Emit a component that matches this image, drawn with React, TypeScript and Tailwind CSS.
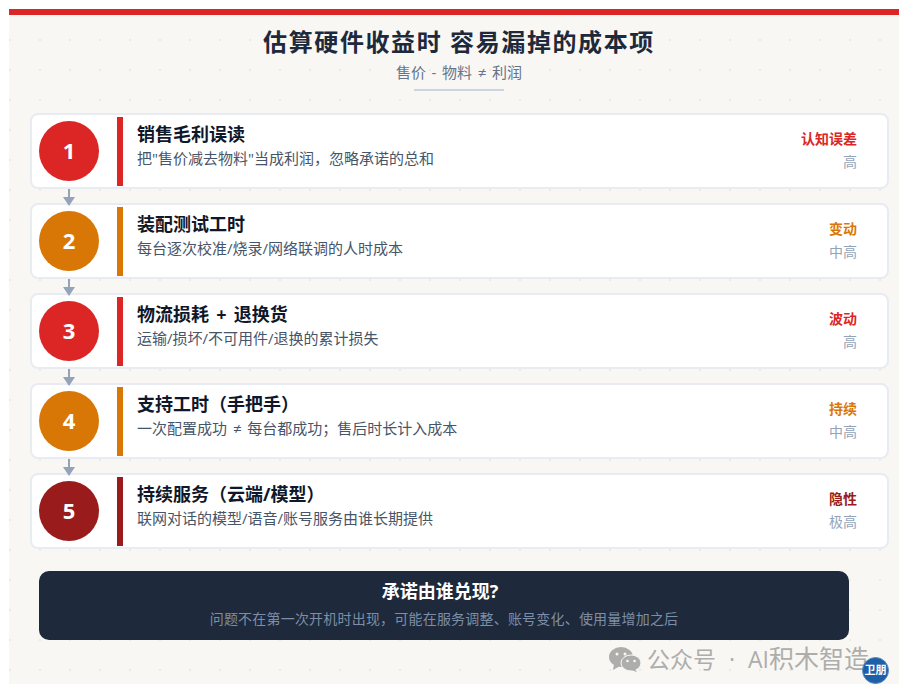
const rows = [
  { n: "1", title: "销售毛利误读", desc: '把"售价减去物料"当成利润，忽略承诺的总和', tag: "认知误差", level: "高", bg: "bg-[#dc2626]", text: "text-[#dc2626]" },
  { n: "2", title: "装配测试工时", desc: "每台逐次校准/烧录/网络联调的人时成本", tag: "变动", level: "中高", bg: "bg-[#d97706]", text: "text-[#d97706]" },
  { n: "3", title: "物流损耗 + 退换货", desc: "运输/损坏/不可用件/退换的累计损失", tag: "波动", level: "高", bg: "bg-[#dc2626]", text: "text-[#dc2626]" },
  { n: "4", title: "支持工时（手把手）", desc: "一次配置成功 ≠ 每台都成功；售后时长计入成本", tag: "持续", level: "中高", bg: "bg-[#d97706]", text: "text-[#d97706]" },
  { n: "5", title: "持续服务（云端/模型）", desc: "联网对话的模型/语音/账号服务由谁长期提供", tag: "隐性", level: "极高", bg: "bg-[#991b1b]", text: "text-[#991b1b]" },
];

function Row({ r, last }: { r: (typeof rows)[number]; last: boolean }) {
  return (
    <div className="relative">
      <div className="flex h-[76px] items-center rounded-lg border-2 border-[#e8ecf2] bg-white pl-[7px] pr-[30px]">
        <div className={`flex h-[60px] w-[60px] shrink-0 items-center justify-center rounded-full pb-[2px] text-[22px] font-bold text-white ${r.bg}`}>{r.n}</div>
        <div className={`ml-[18px] h-[69px] w-[6px] shrink-0 ${r.bg}`} />
        <div className="ml-[14px] flex-1 pb-[13px]">
          <div className="text-[18px] font-bold leading-[24px] text-[#0f172a] [word-spacing:2.5px]">{r.title}</div>
          <div className="mt-[2px] text-[15px] leading-[20px] text-[#475569] [word-spacing:2px]">{r.desc}</div>
        </div>
        <div className="flex flex-col items-end pb-[2px]">
          <div className={`text-[14px] font-bold leading-[20px] ${r.text}`}>{r.tag}</div>
          <div className="mt-[3px] text-[14px] leading-[20px] text-[#94a3b8]">{r.level}</div>
        </div>
      </div>
      {!last && (
        <div className="absolute left-[33px] top-[76px] z-10 flex w-[12px] flex-col items-center">
          <div className="h-[10px] w-[2px] bg-[#94a3b8]" />
          <svg width="12" height="9" viewBox="0 0 12 9" className="-mt-[2px]"><path d="M0 0H12L6 9Z" fill="#94a3b8" /></svg>
        </div>
      )}
    </div>
  );
}

export default function App() {
  return (
    <div className="h-[694px] w-[899px] overflow-hidden bg-white pl-[9px] pt-[9px] font-['Open_Sans','Noto_Sans_CJK_SC',sans-serif]">
      <div className="relative h-[675px] w-[890px] border-t-[6px] border-[#dc2626] bg-[#f8f7f4] bg-[radial-gradient(circle,#eceae6_1.2px,transparent_1.5px)] bg-[length:30px_30px] bg-[position:-14px_10px]">
        <div className="flex flex-col items-center pl-[10px] pt-[9px]">
          <h1 className="text-[24px] font-bold leading-[36px] tracking-[1.6px] text-[#1e293b]">估算硬件收益时 容易漏掉的成本项</h1>
          <div className="mt-[2px] text-[15px] leading-[20px] tracking-[0.1px] text-[#64748b] [word-spacing:1.5px]">售价 - 物料 ≠ 利润</div>
          <div className="mt-[7px] h-[2px] w-[90px] bg-[#cbd5e1]" />
        </div>
        <div className="ml-[21px] mt-[22px] flex w-[859px] flex-col gap-[14px]">
          {rows.map((r, i) => <Row key={r.n} r={r} last={i === rows.length - 1} />)}
        </div>
        <div className="ml-[30px] mt-[22px] flex h-[69px] w-[810px] flex-col items-center rounded-[10px] bg-[#1e293b] pt-[8px]">
          <div className="mr-[8px] text-[18px] font-bold leading-[24px] text-white">承诺由谁兑现?</div>
          <div className="mt-[6px] text-[14px] leading-[20px] tracking-[0.2px] text-[#7d8ea6]">问题不在第一次开机时出现，可能在服务调整、账号变化、使用量增加之后</div>
        </div>
        <div className="absolute left-[600px] top-[628px] flex items-center text-[#adadab]">
          <svg width="32" height="26" viewBox="0 0 32 26" className="mr-[6px]">
            <ellipse cx="12" cy="11" rx="12" ry="10" fill="#adadab" />
            <path d="M5 18 L4 24 L11 20Z" fill="#adadab" />
            <ellipse cx="22" cy="17" rx="10" ry="8" fill="#adadab" stroke="#f8f7f4" strokeWidth="1" />
            <path d="M26 23 L28 26 L22 24Z" fill="#adadab" />
            <circle cx="8" cy="8" r="1.5" fill="#f8f7f4" />
            <circle cx="16" cy="8" r="1.5" fill="#f8f7f4" />
            <circle cx="18.5" cy="15" r="1.3" fill="#f8f7f4" />
            <circle cx="25.5" cy="15" r="1.3" fill="#f8f7f4" />
          </svg>
          <span className="whitespace-nowrap text-[23px] leading-[30px]">公众号<span className="mx-[13px]">·</span>AI<span className="text-[25px]">积木智造</span></span>
        </div>
        <div className="absolute left-[853px] top-[642px] flex h-[27px] w-[27px] items-center justify-center rounded-full border border-[#5b8cc4] bg-[#1f5fa8] text-[11px] font-bold text-white">卫朋</div>
      </div>
    </div>
  );
}
